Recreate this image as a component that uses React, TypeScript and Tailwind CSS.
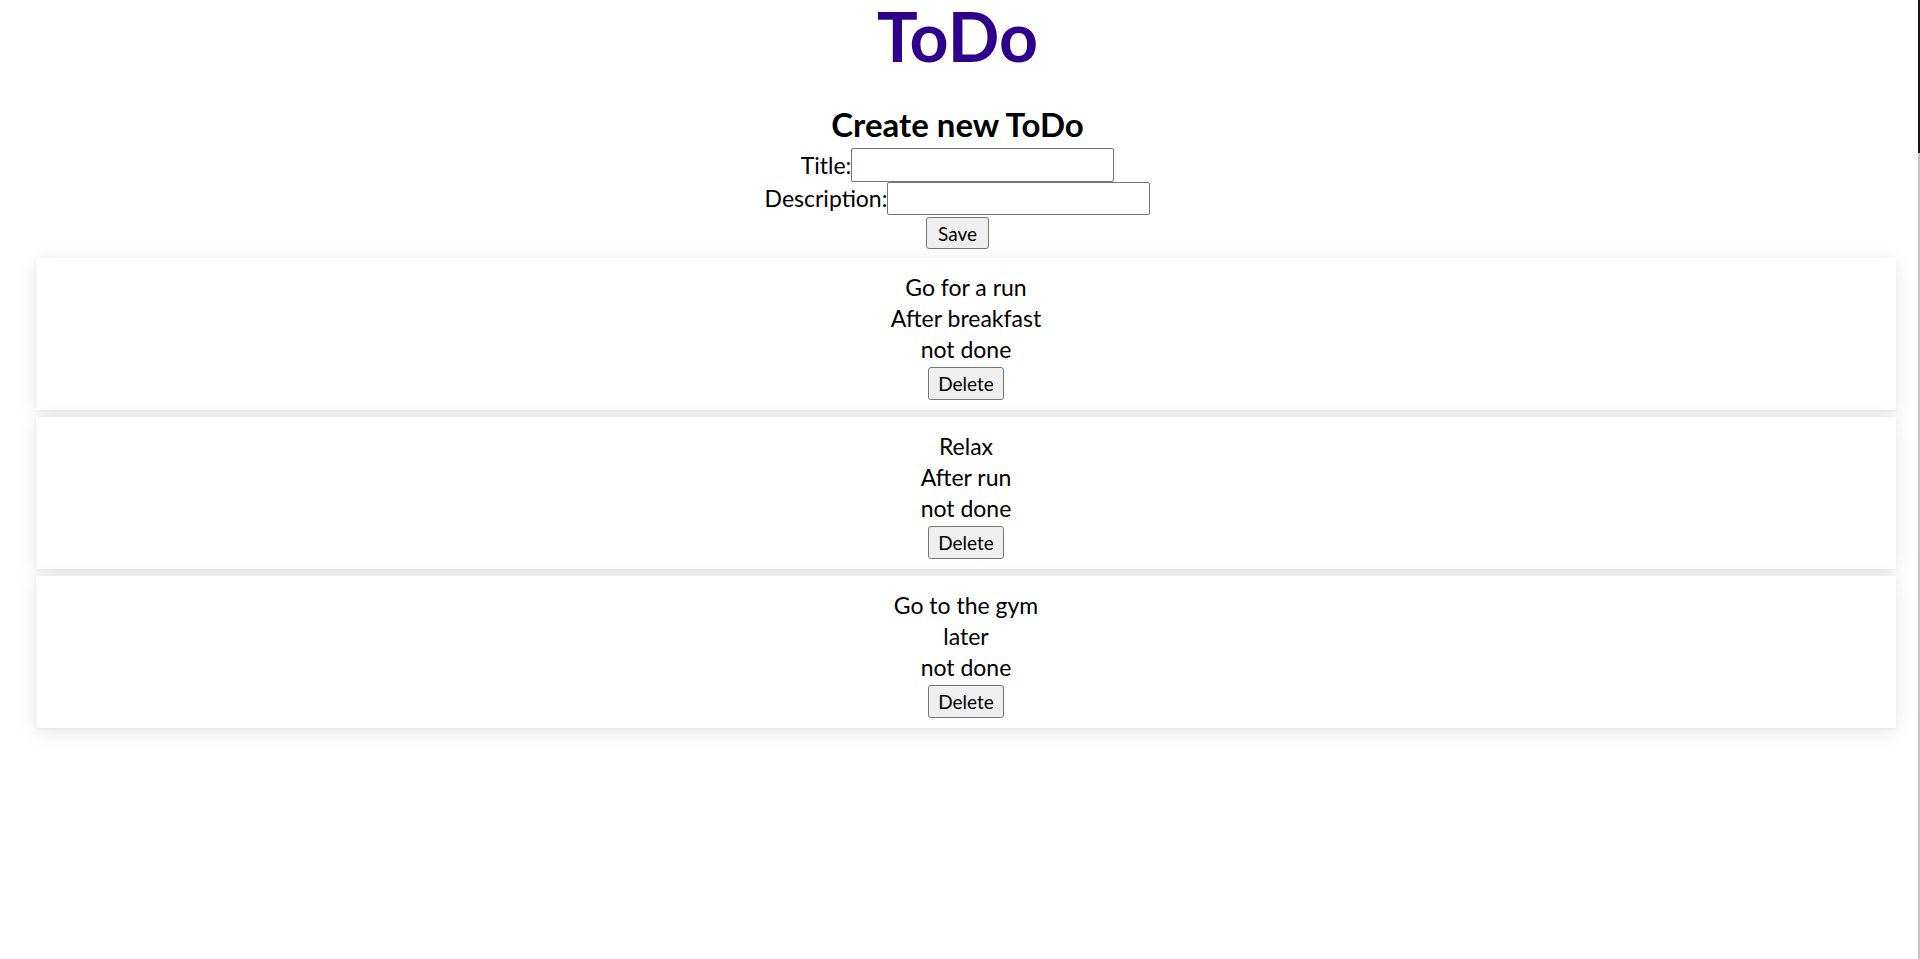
const todos = [
  { title: "Go for a run", description: "After breakfast", done: false },
  { title: "Relax", description: "After run", done: false },
  { title: "Go to the gym", description: "later", done: false },
];

function TodoCard({ title, description, done }: { title: string; description: string; done: boolean }) {
  return (
    <div className="ml-[36px] mr-[19px] h-[152px] bg-white pt-[14px] flex flex-col items-center shadow-[0_4px_18px_0_rgba(0,0,0,0.1),0_1px_4px_0_rgba(0,0,0,0.04)]">
      <div className="leading-[31px]">{title}</div>
      <div className="leading-[31px]">{description}</div>
      <div className="leading-[31px]">{done ? "done" : "not done"}</div>
      <button className="mt-[2px] h-[33px] w-[76px] bg-[#efefef] border border-[#767676] rounded-[3px] text-[19px] leading-none">
        Delete
      </button>
    </div>
  );
}

export default function App() {
  return (
    <div className="min-h-screen flex bg-white text-black font-['Lato',sans-serif] text-[23px]">
      <div className="w-[1915px] flex flex-col">
        <h1 className="mt-[2px] text-center text-[68px] leading-none font-bold text-[#2e008b]">ToDo</h1>
        <h2 className="mt-[38px] text-center text-[33px] leading-none font-bold">Create new ToDo</h2>
        <div className="mt-[7px] flex flex-col items-center">
          <div className="flex items-center h-[34px]">
            <span className="leading-none">Title:</span>
            <input className="w-[263px] h-[34px] border border-[#767676] rounded-[2px] px-1 text-[20px]" />
          </div>
          <div className="flex items-center h-[33px]">
            <span className="leading-none">Description:</span>
            <input className="w-[263px] h-[33px] border border-[#767676] rounded-[2px] px-1 text-[20px]" />
          </div>
          <button className="mt-[2px] h-[32px] w-[63px] bg-[#efefef] border border-[#767676] rounded-[3px] text-[19px] leading-none">
            Save
          </button>
        </div>
        <div className="mt-[9px] flex flex-col gap-[7px]">
          {todos.map((t) => (
            <TodoCard key={t.title} {...t} />
          ))}
        </div>
      </div>
      <div className="w-[3px]" />
      <div className="w-[2px] flex flex-col">
        <div className="h-[153px] bg-[#15131d]" />
        <div className="flex-1 bg-[#c4c4c4]" />
      </div>
    </div>
  );
}
